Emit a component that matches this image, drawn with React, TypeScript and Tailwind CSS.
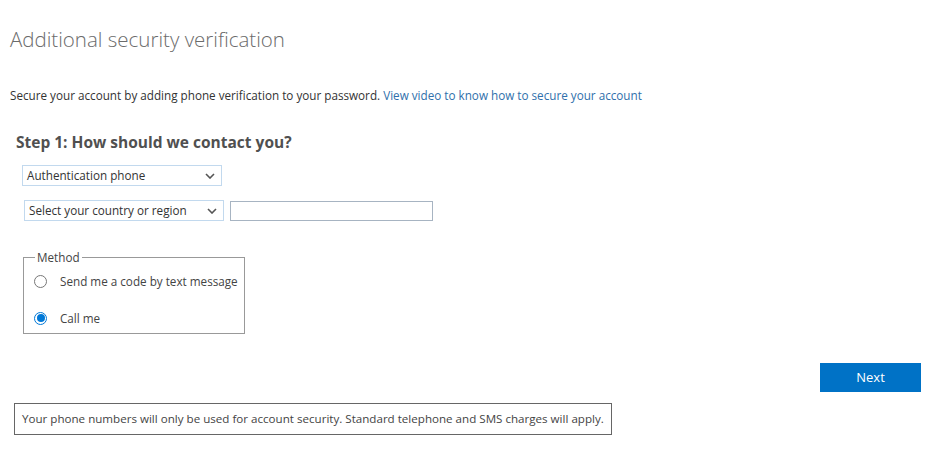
import React from "react";

function Chevron() {
  return (
    <svg width="10" height="6" viewBox="0 0 10 6" className="text-[#555]">
      <path d="M1 1l4 4 4-4" fill="none" stroke="currentColor" strokeWidth="1.6" />
    </svg>
  );
}

function FakeSelect({ label, className }: { label: string; className: string }) {
  return (
    <div
      className={`flex h-[21px] w-[200px] items-center justify-between border border-[#c2d9ee] bg-white pl-[4px] pr-[6px] text-[#333] ${className}`}
    >
      <span>{label}</span>
      <Chevron />
    </div>
  );
}

function Radio({ checked, label }: { checked?: boolean; label: string }) {
  return (
    <label className="flex items-center gap-[13px] whitespace-nowrap">
      {checked ? (
        <span className="flex h-[13px] w-[13px] shrink-0 items-center justify-center rounded-full border border-[#0078d7] bg-white">
          <span className="h-[8px] w-[8px] rounded-full bg-[#0078d7]" />
        </span>
      ) : (
        <span className="h-[13px] w-[13px] shrink-0 rounded-full border border-[#777] bg-white" />
      )}
      <span>{label}</span>
    </label>
  );
}

export default function App() {
  return (
    <div className="min-h-[469px] w-[941px] bg-white font-['Open_Sans','Liberation_Sans',sans-serif] text-[11.7px] text-[#333]">
      <div className="pl-[10px] pt-[25px]">
        <h1 className="text-[20.5px] font-light leading-[28px] text-[#6b6b6b]">
          Additional security verification
        </h1>
        <p className="mt-[34px] leading-[16px]">
          Secure your account by adding phone verification to your password.{" "}
          <a className="text-[#2f6fab]">View video to know how to secure your account</a>
        </p>
      </div>

      <div className="pl-[16px] pt-[29px]">
        <h2 className="text-[15.5px] font-bold leading-[20px] text-[#505050]">Step 1: How should we contact you?</h2>
        <FakeSelect label="Authentication phone" className="ml-[6px] mt-[13px]" />
        <div className="ml-[8px] mt-[14px] flex items-center gap-[6px]">
          <FakeSelect label="Select your country or region" className="" />
          <input className="h-[20px] w-[203px] border border-[#a7b4c2] bg-white outline-none" />
        </div>

        <fieldset className="ml-[7px] mt-[29px] w-[222px] border border-[#999] pb-[6px] pl-[10px] pr-[2px] pt-0">
          <legend className="ml-[1px] px-[2px] leading-[14px] text-[#444]">Method</legend>
          <div className="mt-[9px] flex flex-col gap-[19px] text-[#444]">
            <Radio label="Send me a code by text message" />
            <Radio checked label="Call me" />
          </div>
        </fieldset>
      </div>

      <div className="flex justify-end pr-[20px] pt-[29px]">
        <button className="h-[29px] w-[101px] bg-[#0072c6] text-[13px] text-white">Next</button>
      </div>

      <div className="pl-[14px] pt-[11px]">
        <div className="inline-block border border-[#666] px-[7px] py-[7px] text-[11.6px] leading-[16px] text-[#444]">
          Your phone numbers will only be used for account security. Standard telephone and SMS charges will apply.
        </div>
      </div>
    </div>
  );
}
